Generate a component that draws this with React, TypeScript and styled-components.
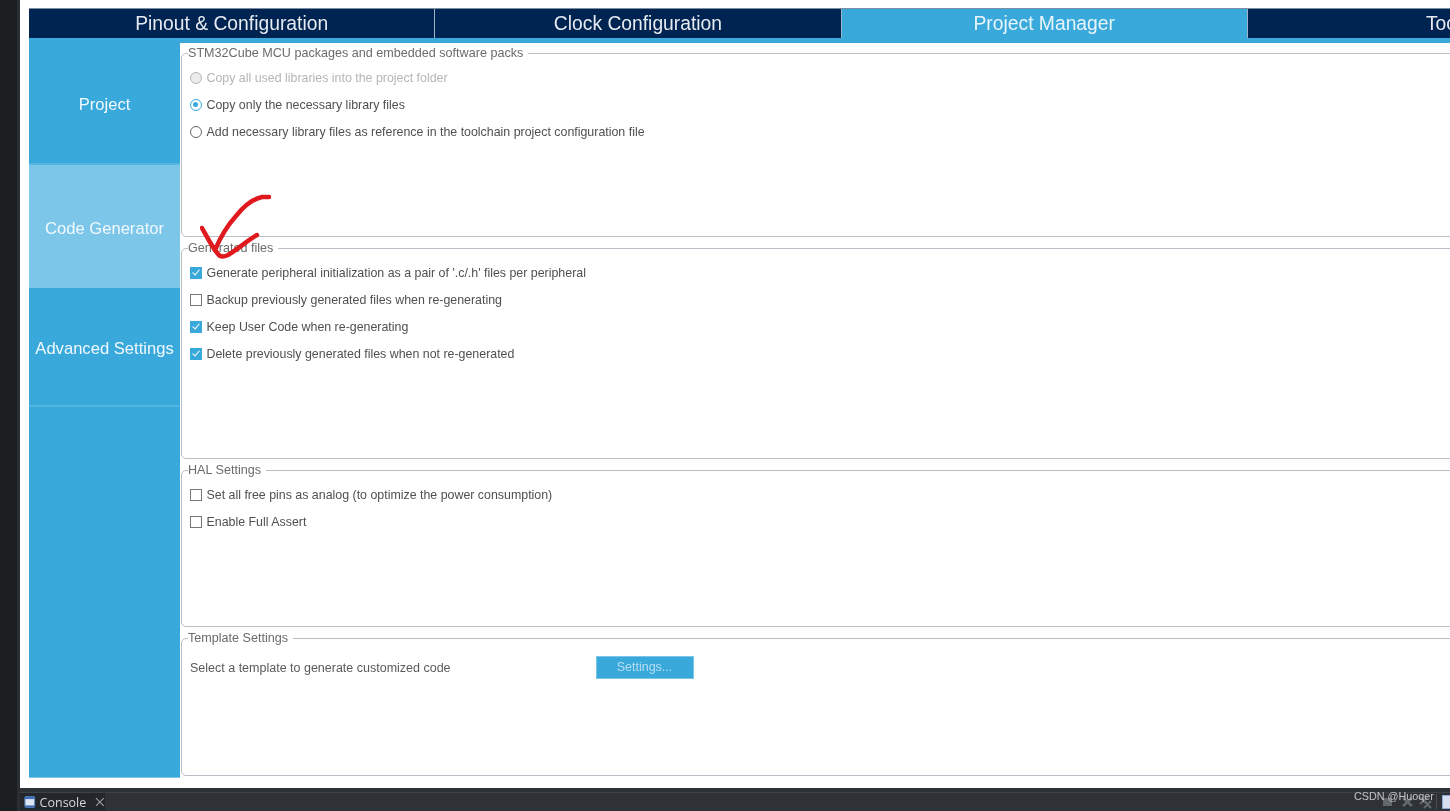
import * as React from 'react'
import styled, { createGlobalStyle } from 'styled-components'

const Global = createGlobalStyle`
  html, body { margin: 0; padding: 0; background: #1d2023; }
  body { font-family: "Liberation Sans", Arial, sans-serif; }
`

const tabs = ['Pinout & Configuration', 'Clock Configuration', 'Project Manager', 'Tools']
const sideItems = [
  { label: 'Project', size: 122 },
  { label: 'Code Generator', size: 123, active: true },
  { label: 'Advanced Settings', size: 119 },
]

const App: React.FC = () => (
  <Page>
    <Global />
    <Rail />
    <Main>
      <Window>
        <TabBar>
          {tabs.map((t, i) => <Tab key={t} $active={i === 2}>{i === 3 ? <TabClip>{t}</TabClip> : t}</Tab>)}
        </TabBar>
        <Body>
          <Sidebar>
            {sideItems.map(it => <SideItem key={it.label} $h={it.size} $active={it.active}>{it.label}</SideItem>)}
          </Sidebar>
          <Content>
            <Group $h={191}>
              <Legend>STM32Cube MCU packages and embedded software packs</Legend>
              <Option $muted><Radio $muted /><span>Copy all used libraries into the project folder</span></Option>
              <Option><Radio $on /><span>Copy only the necessary library files</span></Option>
              <Option><Radio /><span>Add necessary library files as reference in the toolchain project configuration file</span></Option>
            </Group>
            <Group $h={218}>
              <Legend>Generated files</Legend>
              <Option><Check $on /><span>Generate peripheral initialization as a pair of '.c/.h' files per peripheral</span></Option>
              <Option><Check /><span>Backup previously generated files when re-generating</span></Option>
              <Option><Check $on /><span>Keep User Code when re-generating</span></Option>
              <Option><Check $on /><span>Delete previously generated files when not re-generated</span></Option>
            </Group>
            <Group $h={164}>
              <Legend>HAL Settings</Legend>
              <Option><Check /><span>Set all free pins as analog (to optimize the power consumption)</span></Option>
              <Option><Check /><span>Enable Full Assert</span></Option>
            </Group>
            <Group $h={145}>
              <Legend>Template Settings</Legend>
              <TemplateRow>
                <TemplateLabel>Select a template to generate customized code</TemplateLabel>
                <SettingsButton>Settings...</SettingsButton>
              </TemplateRow>
            </Group>
          </Content>
        </Body>
      </Window>
      <ConsoleBar>
        <ConsoleTab>
          <svg width="14" height="14" viewBox="0 0 14 14">
            <rect x="2" y="1.5" width="10" height="11" rx="1" fill="#dfe6f2" stroke="#5b84c4" />
            <rect x="2" y="1.5" width="10" height="2.5" fill="#3f6fb8" />
            <rect x="2" y="10.5" width="10" height="2" fill="#3f6fb8" />
          </svg>
          <span>Console</span>
          <CloseMark viewBox="0 0 10 10" width="10" height="10">
            <path d="M1 1l8 8M9 1l-8 8" />
          </CloseMark>
        </ConsoleTab>
        <ToolIcons>
          <svg width="62" height="16" viewBox="0 0 62 16">
            <rect x="7" y="4" width="9" height="8" fill="#63686c" />
            <path d="M27 4l9 8M36 4l-9 8" stroke="#63686c" strokeWidth="2.5" />
            <path d="M44 3l8 7M52 3l-8 7M48 7l7 7M55 7l-7 7" stroke="#63686c" strokeWidth="2" />
            <rect x="60" y="0" width="1" height="15" fill="#4a4f53" />
          </svg>
          <DocIcon />
        </ToolIcons>
      </ConsoleBar>
    </Main>
    <Tick viewBox="0 0 80 70" width="80" height="70">
      <path d="M2 34 C7 43 12 53 18 60 C20 63 24 63 28 61 C38 55 48 46 57 41" />
      <path d="M15 56 C20 44 27 32 36 22 C44 12 53 5 62 3 L69 3" />
    </Tick>
    <Watermark>CSDN @Huoqer</Watermark>
  </Page>
)

export default App

const Page = styled.div`
  position: relative; display: flex; width: 1450px; height: 811px; overflow: hidden; filter: blur(.35px);
`
const Rail = styled.div`
  width: 20px; flex: none; background: linear-gradient(90deg, #1c1f21 0 17px, #2a2e32 17px);
`
const Main = styled.div`
  flex: 1; min-width: 0; display: flex; flex-direction: column;
`
const Window = styled.div`
  height: 788px; flex: none; box-sizing: border-box; padding: 8px 0 0 9px; background: #fff; overflow: hidden;
`
const TabBar = styled.div`
  display: flex; width: 1500px; height: 35px; box-sizing: border-box;
  background: #002451; border-bottom: 5px solid #39a9dc; border-top: 1px solid #7f8da0;
`
const Tab = styled.div<{ $active?: boolean }>`
  width: 406.3px; flex: none; box-sizing: border-box; display: flex; align-items: center; justify-content: center;
  font-size: 19.3px; color: ${p => p.$active ? '#e8f5fb' : '#e6ebf1'};
  background: ${p => p.$active ? '#39a9dc' : '#002451'};
  border-right: 1px solid #9fb2c6;
`
const TabClip = styled.span`
  display: block; width: 100%; padding-left: 178px;
`
const Body = styled.div`
  display: flex; height: 735px;
`
const Sidebar = styled.div`
  width: 151px; flex: none; background: #39a9dc; border-bottom: 1px solid #7cc5e8; box-sizing: border-box;
`
const SideItem = styled.div<{ $h: number, $active?: boolean }>`
  height: ${p => p.$h}px; box-sizing: border-box; padding-top: 4px; display: flex; align-items: center; justify-content: center;
  font-size: 16.6px; color: #f1f9fd;
  background: ${p => p.$active ? '#7cc6e9' : '#39a9dc'};
  border-bottom: ${p => p.$active ? '0' : '2px solid #55b5e2'};
`
const Content = styled.div`
  flex: 1; margin-left: 1px; margin-right: -20px; padding-top: 3px; display: flex; flex-direction: column; gap: 4px;
`
const Group = styled.fieldset<{ $h: number }>`
  margin: 0; height: ${p => p.$h}px; box-sizing: border-box; min-width: 0;
  padding: 4px 0 0 8px; border: 1.5px solid #b9bec7; border-radius: 5px;
`
const Legend = styled.legend`
  padding: 0 5px 0 0; margin-left: -2px; font-size: 12.6px; line-height: 14px; color: #6b6b6b;
`
const Option = styled.div<{ $muted?: boolean }>`
  height: 27px; display: flex; align-items: center; gap: 4.5px; font-size: 12.4px;
  color: ${p => p.$muted ? '#b5b5b5' : '#505050'};
`
const Radio = styled.span<{ $on?: boolean, $muted?: boolean }>`
  width: 12px; height: 12px; flex: none; border-radius: 50%; box-sizing: border-box; position: relative;
  border: 1.5px solid ${p => p.$on ? '#39a9dc' : p.$muted ? '#b5b5b5' : '#666'};
  background: ${p => p.$muted ? '#ececec' : '#fff'};
  &::after {
    content: ''; display: ${p => p.$on ? 'block' : 'none'}; position: absolute; left: 2px; top: 2px;
    width: 5px; height: 5px; border-radius: 50%; background: #39a9dc;
  }
`
const Check = styled.span<{ $on?: boolean }>`
  width: 12px; height: 12px; flex: none; box-sizing: border-box; position: relative;
  border: 1.5px solid ${p => p.$on ? '#39a9dc' : '#777'};
  background: ${p => p.$on ? '#39a9dc' : '#fff'};
  &::after {
    content: ''; display: ${p => p.$on ? 'block' : 'none'}; position: absolute; left: 2.5px; top: 0;
    width: 3px; height: 6px; border: solid #fff; border-width: 0 1.5px 1.5px 0; transform: rotate(40deg);
  }
`
const TemplateRow = styled.div`
  display: flex; align-items: center; height: 24px; margin-top: 6px;
`
const TemplateLabel = styled.span`
  width: 405.5px; flex: none; font-size: 12.5px; color: #5a5a5a; padding-top: 1px;
`
const SettingsButton = styled.div`
  width: 98px; height: 23px; box-sizing: border-box; display: flex; align-items: center; justify-content: center;
  background: #39a9dc; border: 1px solid #7cc5e8; color: #b6def2; font-size: 12.5px;
`
const ConsoleBar = styled.div`
  height: 23px; flex: none; box-sizing: border-box; display: flex; justify-content: space-between;
  background: linear-gradient(#2e3236 0 4px, #3d4246 4px 5px, #2e3236 5px); padding-top: 5px;
`
const ConsoleTab = styled.div`
  width: 85px; box-sizing: border-box; display: flex; align-items: center; gap: 3px; padding-left: 3px;
  background: #23272b; color: #d3d6d8; font-size: 12.5px; font-family: "Open Sans", sans-serif;
`
const CloseMark = styled.svg`
  margin-left: 6px; fill: none; stroke: #9a9ea1; stroke-width: 1.2px;
`
const ToolIcons = styled.div`
  display: flex; align-items: center; gap: 4px; margin-right: -4px;
`
const DocIcon = styled.span`
  width: 10px; height: 12px; background: #d7def0; border: 1px solid #8fa8d4;
`
const Tick = styled.svg`
  position: absolute; left: 200px; top: 194px; fill: none; stroke: #e0191f; stroke-width: 4.5px; stroke-linecap: round; stroke-linejoin: round;
`
const Watermark = styled.div`
  position: absolute; left: 1354px; top: 789px; font-size: 10.8px; line-height: 14px; color: rgba(226,228,230,.8);
`
